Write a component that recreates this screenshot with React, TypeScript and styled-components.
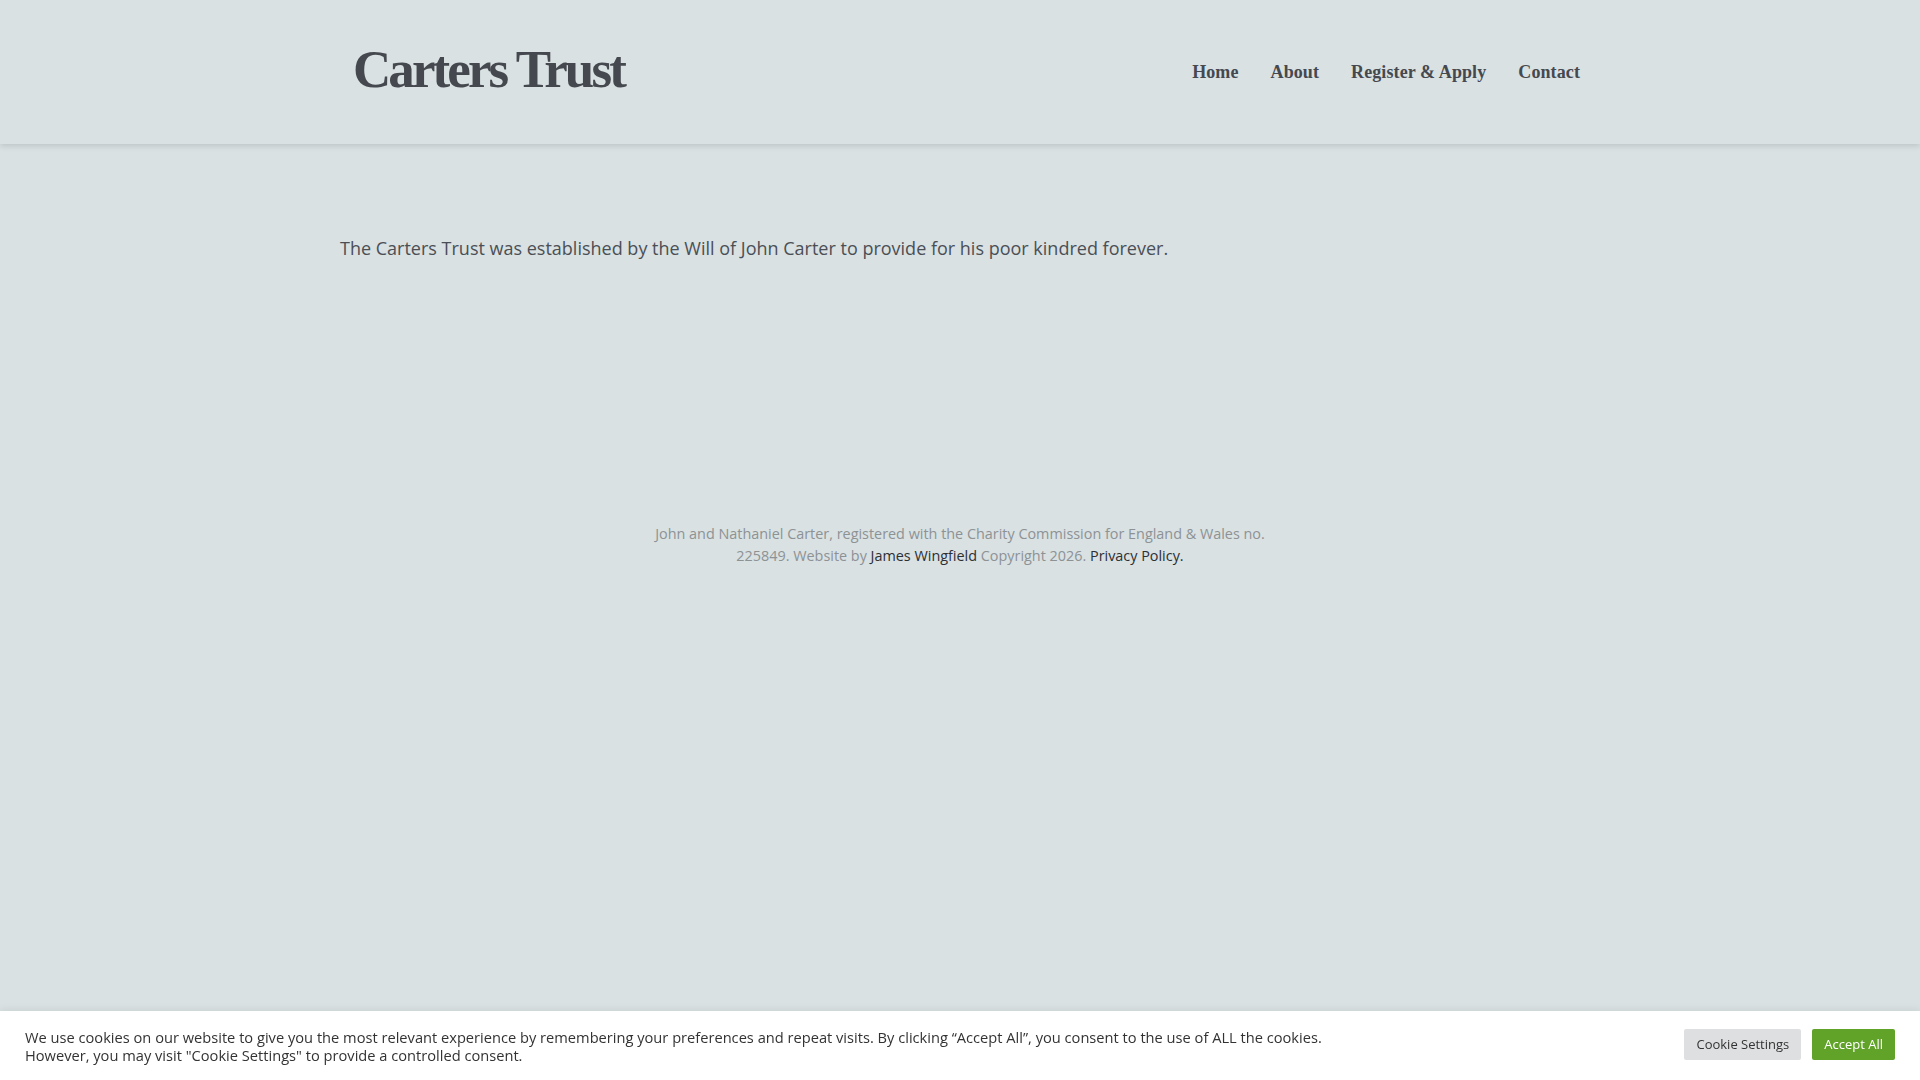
import styled, { createGlobalStyle } from 'styled-components'

const GlobalStyle = createGlobalStyle`
    html, body {
        margin: 0;
        padding: 0;
        background-color: #d9e1e3;
    }
    body {
        font-family: "Open Sans", "Liberation Sans", sans-serif;
        min-height: 1080px;
    }
    * {
        box-sizing: border-box;
    }
`

const Colors = {
    bg: '#d9e1e3',
    heading: '#45494f',
    text: '#4b4f55',
    muted: '#8d9295',
    link: '#2c2f34',
    green: '#61a229',
}

const Header = styled.header`
    height: 144px;
    background-color: ${Colors.bg};
    box-shadow: rgba(0, 0, 0, 0.13) 0px 2px 6px;
    position: relative;
    z-index: 2;
`
const Inner = styled.div`
    width: 1240px;
    margin: 0 auto;
`
const HeaderInner = styled(Inner)`
    height: 100%;
    display: flex;
    align-items: center;
    justify-content: space-between;
`
const Logo = styled.a`
    padding-left: 13px;
    font-family: "Liberation Serif", "DejaVu Serif", serif;
    font-weight: 700;
    font-size: 53px;
    letter-spacing: -2.9px;
    color: ${Colors.heading};
    text-decoration: none;
    line-height: 1;
    margin-top: -6px;
`
const Nav = styled.nav`
    display: flex;
    gap: 32px;
`
const NavLink = styled.a`
    font-family: "Liberation Serif", "DejaVu Serif", serif;
    font-weight: 700;
    font-size: 18px;
    letter-spacing: 0.1px;
    color: ${Colors.heading};
    text-decoration: none;
`
const Main = styled.main`
    padding-top: 90px;
`
const Intro = styled.p`
    margin: 0;
    font-size: 18px;
    line-height: 29px;
    color: ${Colors.text};
`
const Footer = styled.footer`
    margin: 260px auto 0;
    max-width: 640px;
    text-align: center;
    font-size: 14.4px;
    line-height: 22px;
    color: ${Colors.muted};
`
const FooterLink = styled.a`
    color: ${Colors.link};
    text-decoration: none;
`
const CookieBar = styled.div`
    position: fixed;
    left: 0;
    right: 0;
    bottom: 0;
    height: 69px;
    padding: 0 25px 0 25px;
    background-color: #ffffff;
    box-shadow: rgba(0, 0, 0, 0.08) 0px -1px 8px;
    display: flex;
    align-items: center;
    justify-content: space-between;
    z-index: 10;
`
const CookieText = styled.p`
    margin: 0;
    font-size: 14.65px;
    line-height: 18px;
    color: #333333;
`
const ButtonRow = styled.div`
    display: flex;
    gap: 11px;
    align-self: center;
    margin-top: -3px;
`
const CookieButton = styled.button<{ $primary?: boolean }>`
    height: 31px;
    padding: 0 12px;
    border: none;
    border-radius: 2px;
    font-family: "Open Sans", "Liberation Sans", sans-serif;
    font-size: 13px;
    cursor: pointer;
    background-color: ${({ $primary }) => ($primary ? Colors.green : '#dedfe0')};
    color: ${({ $primary }) => ($primary ? '#ffffff' : '#333333')};
`

const navItems = ['Home', 'About', 'Register & Apply', 'Contact']

const App = () => {
    return (
        <>
            <GlobalStyle />
            <Header>
                <HeaderInner>
                    <Logo href="#">Carters Trust</Logo>
                    <Nav>
                        {navItems.map((item) =>
                            <NavLink key={item} href="#">{item}</NavLink>
                        )}
                    </Nav>
                </HeaderInner>
            </Header>
            <Main>
                <Inner>
                    <Intro>The Carters Trust was established by the Will of John Carter to provide for his poor kindred forever.</Intro>
                </Inner>
                <Footer>
                    John and Nathaniel Carter, registered with the Charity Commission for England &amp; Wales no. 225849. Website by <FooterLink href="#">James Wingfield</FooterLink> Copyright 2026. <FooterLink href="#">Privacy Policy.</FooterLink>
                </Footer>
            </Main>
            <CookieBar>
                <CookieText>
                    We use cookies on our website to give you the most relevant experience by remembering your preferences and repeat visits. By clicking “Accept All”, you consent to the use of ALL the cookies.<br />
                    However, you may visit "Cookie Settings" to provide a controlled consent.
                </CookieText>
                <ButtonRow>
                    <CookieButton>Cookie Settings</CookieButton>
                    <CookieButton $primary>Accept All</CookieButton>
                </ButtonRow>
            </CookieBar>
        </>
    )
}

export default App
